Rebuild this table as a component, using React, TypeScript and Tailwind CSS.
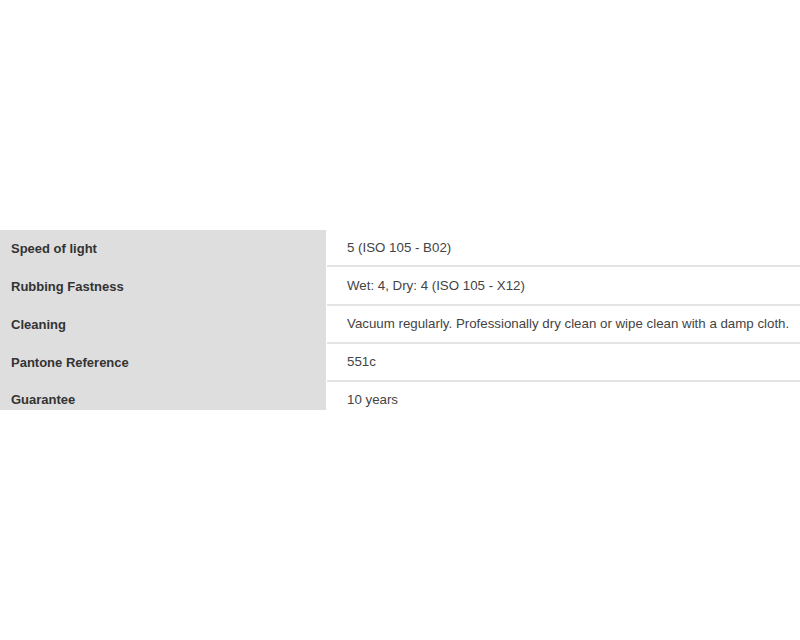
const rows = [
  { label: 'Speed of light', value: '5 (ISO 105 - B02)', h: 'h-[37px]' },
  { label: 'Rubbing Fastness', value: 'Wet: 4, Dry: 4 (ISO 105 - X12)', h: 'h-[39px]' },
  { label: 'Cleaning', value: 'Vacuum regularly. Professionally dry clean or wipe clean with a damp cloth.', h: 'h-[38px]' },
  { label: 'Pantone Reference', value: '551c', h: 'h-[38px]' },
  { label: 'Guarantee', value: '10 years', h: 'h-[35px]' },
];

export default function App() {
  return (
    <div className="w-[800px] h-[640px] bg-white pt-[230px]" style={{ fontFamily: '"Liberation Sans", Arial, sans-serif' }}>
      <div className="h-[180px] overflow-hidden">
        {rows.map((row, i) => (
          <div key={row.label} className={`flex ${row.h}`}>
            <div className="w-[326px] shrink-0 bg-[#dedede] flex items-center pl-[11px] text-[13px] font-bold text-[#333]">
              {row.label}
            </div>
            <div
              className={`flex-1 ml-[1px] flex items-center pl-[20px] text-[13.3px] text-[#444] ${
                i < rows.length - 1 ? 'border-b-2 border-[#e4e4e4]' : ''
              }`}
            >
              {row.value}
            </div>
          </div>
        ))}
      </div>
    </div>
  );
}
